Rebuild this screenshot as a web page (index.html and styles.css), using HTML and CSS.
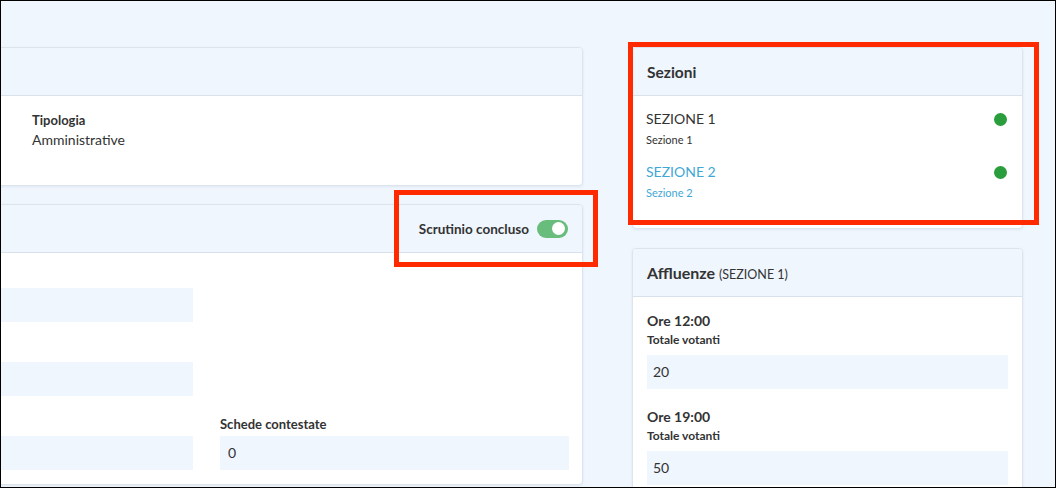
FILE: index.html
```html
<!DOCTYPE html>
<html lang="it">
<head>
<meta charset="utf-8">
<title>Scrutinio</title>
<link rel="stylesheet" href="styles.css">
</head>
<body>
<div class="frame">
  <div class="layout">
    <div class="col-left">
      <section class="card">
        <header class="card-head"></header>
        <div class="card-body info-grid">
          <div class="info"></div>
          <div class="info">
            <div class="info-label">Tipologia</div>
            <div class="info-value">Amministrative</div>
          </div>
        </div>
      </section>

      <section class="card">
        <header class="card-head head-right">
          <span class="switch-label">Scrutinio concluso</span>
          <span class="switch"><span class="knob"></span></span>
        </header>
        <div class="card-body form-grid">
          <div class="field">
            <div class="field-label"></div>
            <div class="input"></div>
          </div>
          <div class="field"></div>
          <div class="field">
            <div class="field-label"></div>
            <div class="input"></div>
          </div>
          <div class="field"></div>
          <div class="field">
            <div class="field-label"></div>
            <div class="input"></div>
          </div>
          <div class="field">
            <div class="field-label">Schede contestate</div>
            <div class="input">0</div>
          </div>
        </div>
      </section>
    </div>

    <div class="col-right">
      <section class="card">
        <header class="card-head"><h2 class="card-title">Sezioni</h2></header>
        <div class="card-body sez-list">
          <div class="sez">
            <div class="sez-text">
              <div class="sez-name">SEZIONE 1</div>
              <div class="sez-sub">Sezione 1</div>
            </div>
            <span class="dot"></span>
          </div>
          <div class="sez active">
            <div class="sez-text">
              <div class="sez-name">SEZIONE 2</div>
              <div class="sez-sub">Sezione 2</div>
            </div>
            <span class="dot"></span>
          </div>
        </div>
      </section>

      <section class="card">
        <header class="card-head"><h2 class="card-title title-lg">Affluenze <span class="title-note">(SEZIONE 1)</span></h2></header>
        <div class="card-body">
          <div class="aff">
            <div class="aff-time">Ore 12:00</div>
            <div class="aff-label">Totale votanti</div>
            <div class="input aff-input">20</div>
          </div>
          <div class="aff">
            <div class="aff-time">Ore 19:00</div>
            <div class="aff-label">Totale votanti</div>
            <div class="input aff-input">50</div>
          </div>
        </div>
      </section>
    </div>
  </div>

  <div class="mark mark-sezioni"></div>
  <div class="mark mark-switch"></div>
</div>
</body>
</html>
```

FILE: styles.css
```css
* { box-sizing: border-box; }

html, body {
  margin: 0;
  padding: 0;
}

body {
  font-family: Lato, "Open Sans", sans-serif;
  color: #333;
  background: #fff;
}

.frame {
  position: relative;
  width: 1056px;
  height: 488px;
  border: 1px solid #000;
  background: #eff6fe;
  overflow: hidden;
}

.layout {
  display: flex;
  gap: 49px;
  margin-left: -172px;
  padding-top: 46px;
}

.col-left {
  width: 754px;
  display: flex;
  flex-direction: column;
  gap: 18px;
  flex: none;
}

.col-right {
  width: 391px;
  display: flex;
  flex-direction: column;
  gap: 19px;
  flex: none;
}

.card {
  background: #fff;
  border: 1px solid #dde4ec;
  border-radius: 4px;
  box-shadow: 0 1px 3px rgba(40, 60, 90, 0.08);
  overflow: hidden;
}

.card-head {
  height: 48px;
  background: #eff6fe;
  border-bottom: 1px solid #d9e1ea;
  display: flex;
  align-items: center;
  padding: 0 14px;
}

.head-right {
  justify-content: flex-end;
}

.card-title {
  margin: 0;
  font-size: 15.5px;
  font-weight: 700;
  color: #333;
}

.title-lg {
  font-size: 16px;
}

.title-note {
  font-size: 12.5px;
  font-weight: 400;
}

.card-body {
  padding: 14px 14px;
}

/* info card */
.info-grid {
  display: grid;
  grid-template-columns: 188px 1fr;
  height: 89px;
  padding-top: 15px;
}

.info-label {
  font-size: 13px;
  font-weight: 700;
  line-height: 18px;
}

.info-value {
  font-size: 14px;
  line-height: 22px;
}

/* switch */
.switch-label {
  font-size: 13.5px;
  font-weight: 700;
  margin-right: 8px;
}

.switch {
  width: 31px;
  height: 18px;
  border-radius: 9px;
  background: #68bd7c;
  display: flex;
  align-items: center;
  justify-content: flex-end;
  padding: 0 3px;
}

.knob {
  width: 13px;
  height: 13px;
  border-radius: 50%;
  background: #fff;
}

/* form */
.form-grid {
  display: grid;
  grid-template-columns: 349px 349px;
  column-gap: 27px;
  row-gap: 19px;
  padding-top: 14px;
  padding-left: 14px;
}

.field-label {
  height: 18px;
  font-size: 13px;
  font-weight: 700;
  line-height: 18px;
  margin-bottom: 3px;
  white-space: nowrap;
}

.input {
  height: 34px;
  background: #eff6fe;
  font-size: 14px;
  line-height: 34px;
  padding: 0 8px;
  color: #333;
}

/* sezioni */
.sez-list {
  padding: 13px 15px 13px 13px;
}

.sez {
  display: flex;
  justify-content: space-between;
  align-items: flex-start;
  margin-bottom: 14px;
}

.sez-name {
  font-size: 14px;
  line-height: 20px;
}

.sez-sub {
  font-size: 11px;
  line-height: 16px;
  margin-top: 3px;
}

.sez.active {
  color: #3fa8d5;
}

.dot {
  width: 13px;
  height: 13px;
  border-radius: 50%;
  background: #2a9e3d;
  margin-top: 4px;
}

/* affluenze */
.aff {
  margin-bottom: 18px;
}

.aff-time {
  font-size: 14px;
  font-weight: 700;
  line-height: 20px;
}

.aff-label {
  font-size: 12px;
  font-weight: 700;
  line-height: 16px;
  margin-top: 1px;
  margin-bottom: 7px;
}

.aff-input {
  padding-left: 6px;
}

/* annotation marks */
.mark {
  position: absolute;
  border: 5px solid #ff2a00;
}

.mark-sezioni {
  left: 627px;
  top: 41px;
  width: 411px;
  height: 183px;
}

.mark-switch {
  left: 393px;
  top: 189px;
  width: 204px;
  height: 77px;
}
```
